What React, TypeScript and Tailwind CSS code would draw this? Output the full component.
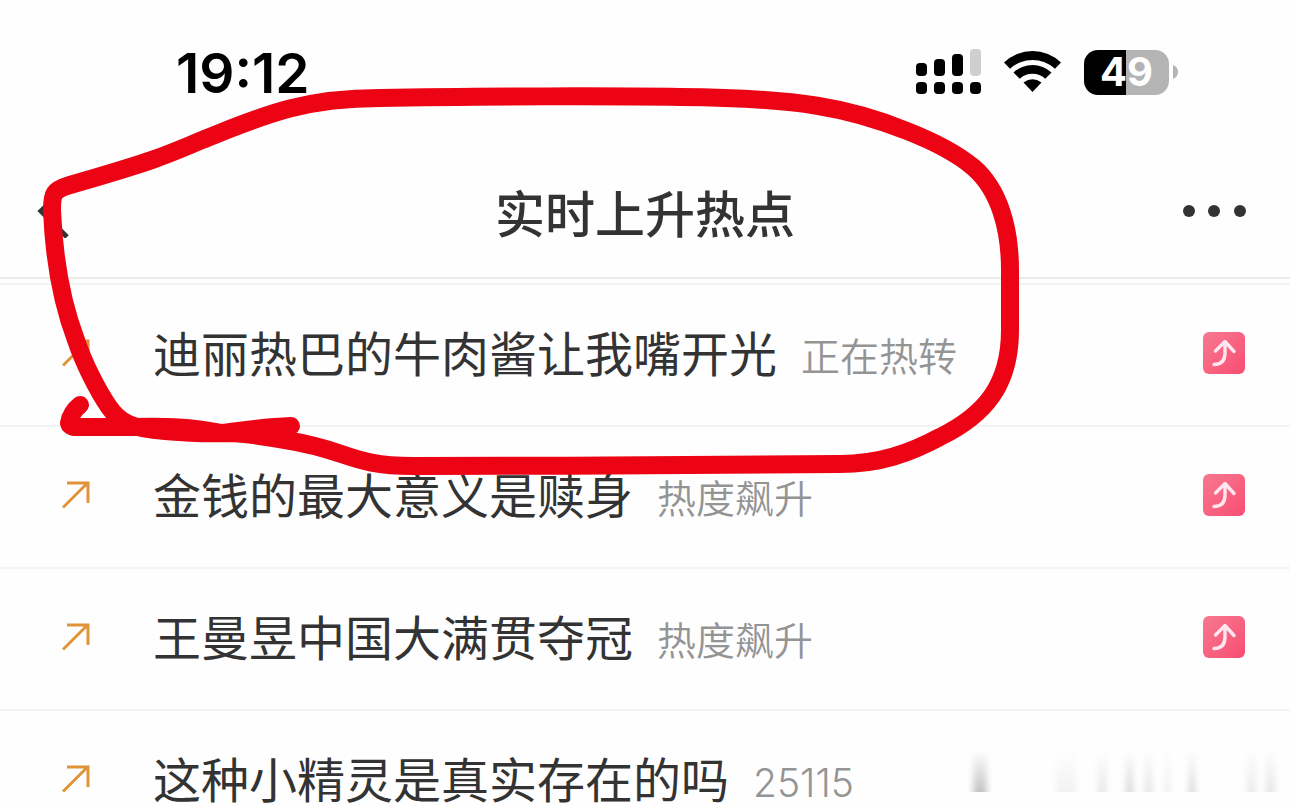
import type { ReactNode } from "react";

type Topic = { title: string; note: string; rising: boolean };

const topics: Topic[] = [
  { title: "迪丽热巴的牛肉酱让我嘴开光", note: "正在热转", rising: true },
  { title: "金钱的最大意义是赎身", note: "热度飙升", rising: true },
  { title: "王曼昱中国大满贯夺冠", note: "热度飙升", rising: true },
  { title: "这种小精灵是真实存在的吗", note: "25115", rising: false },
];

function Signal() {
  return (
    <svg width="66" height="46" viewBox="0 0 66 46" aria-label="信号">
      <rect x="0" y="14" width="11" height="13" rx="4" />
      <rect x="18" y="10" width="11" height="17" rx="4" />
      <rect x="36" y="5" width="11" height="22" rx="4" />
      <rect x="54" y="0" width="11" height="27" rx="4" fill="#cfcfcf" />
      {[0, 18, 36, 54].map((x) => (
        <rect key={x} x={x} y="33" width="11" height="12" rx="4" />
      ))}
    </svg>
  );
}

function Wifi() {
  return (
    <svg width="58" height="44" viewBox="0 0 58 44" aria-label="无线网络">
      <path d="M0 12.500 A41 41 0 0 1 57 12.500 L51 18.800 A33 33 0 0 0 6 18.800 Z" />
      <path d="M9.500 22.500 A28 28 0 0 1 47.500 22.500 L41.300 28.800 A19 19 0 0 0 15.700 28.800 Z" />
      <path d="M19.500 32.500 Q28.500 26 37.500 32.500 L28.500 42 Z" />
    </svg>
  );
}

function Battery() {
  return (
    <div className="flex items-center gap-1" aria-label="电量 49%">
      <div className="flex h-[45px] w-[85px] items-center justify-center rounded-[14px] bg-[linear-gradient(to_right,#000_50%,#b4b4b4_50%)] font-[Inter,sans-serif] text-[40px] leading-none font-bold text-white">
        49
      </div>
      <svg width="5" height="14" viewBox="0 0 5 14">
        <path d="M0 0 Q5 2 5 7 Q5 12 0 14Z" fill="#b4b4b4" />
      </svg>
    </div>
  );
}

function IconButton({ label, children }: { label: string; children: ReactNode }) {
  return (
    <button type="button" aria-label={label} className="flex items-center">
      {children}
    </button>
  );
}

function TrendArrow() {
  return (
    <svg width="28" height="28" viewBox="0 0 28 28" fill="none" stroke="#e0943a" strokeWidth="3">
      <path d="M1 26.500 L25.500 2 M5 2 H26 V22" />
    </svg>
  );
}

function RisingBadge() {
  return (
    <span className="flex size-[42px] rounded-md bg-linear-to-br from-[#f6788f] to-[#f84c72]">
      <svg
        width="42"
        height="42"
        viewBox="0 0 42 42"
        fill="none"
        stroke="#ffe6f0"
        strokeWidth="3.400"
        strokeLinecap="round"
        strokeLinejoin="round"
        aria-label="上升"
      >
        <path d="M12.500 19 L22 9.500 L31 19.500 M22 10 V21 Q22 32.500 11 32.500" />
      </svg>
    </span>
  );
}

function TopicRow({ topic }: { topic: Topic }) {
  return (
    <li className="border-t-2 border-[#f4f4f4]">
      <a href="#topic" className="flex h-[140px] items-center pr-[45px] pb-1 pl-[62px]">
        <TrendArrow />
        <span className="ml-[63px] pb-1 text-[48px] leading-[44px] text-[#333]">{topic.title}</span>
        <span className="ml-6 flex-1 pt-2 font-[Inter,'Noto_Sans_CJK_SC',sans-serif] text-[39px] leading-[40px] font-[350] text-[#949494]">
          {topic.note}
        </span>
        {topic.rising && <RisingBadge />}
      </a>
    </li>
  );
}

function Scribble() {
  return (
    <svg
      className="pointer-events-none absolute top-0 left-0"
      width="1290"
      height="805"
      viewBox="0 0 1290 805"
      fill="none"
      stroke="#ec0414"
      strokeWidth="18"
      strokeLinecap="round"
      strokeLinejoin="round"
      aria-hidden="true"
    >
      <path d="M80 405 Q71 412 69 423 Q70 427 77 427 H130 C170 426 190 427 222 433 C245 430 265 427 291 426" />
      <path d="M52 210 C52 194 53 190 70 185 C150 162 165 156 202 140 C260 117 300 98 380 98 C480 96 620 96 680 97 C800 98 850 108 907 131 C935 142 955 152 973 167 C1000 190 1010 230 1010 270 V330 C1010 385 985 415 940 437 C910 453 880 464 840 464 C780 465 558 466 413 466 C350 466 350 450 285 440 C250 434 240 433 222 433 C205 434 190 433 165 431 C132 429 119 422 109 407 C98 391 84 364 76 340 C62 303 54 260 52 210" />
    </svg>
  );
}

function Watermark() {
  const streaks = [
    { x: 33, w: 14, o: 0.34 },
    { x: 116, w: 20, o: 0.07 },
    { x: 158, w: 8, o: 0.14 },
    { x: 186, w: 7, o: 0.23 },
    { x: 205, w: 7, o: 0.16 },
    { x: 225, w: 5, o: 0.1 },
    { x: 249, w: 6, o: 0.24 },
    { x: 307, w: 9, o: 0.12 },
    { x: 326, w: 9, o: 0.14 },
  ];
  return (
    <svg className="pointer-events-none absolute top-[750px] right-0" width="350" height="42" viewBox="0 0 350 42" aria-hidden="true">
      <defs>
        <linearGradient id="fade" x1="0" y1="0" x2="0" y2="1">
          <stop offset="0" stopColor="#555" stopOpacity="0" />
          <stop offset="1" stopColor="#555" />
        </linearGradient>
        <filter id="soft" x="-1" width="3" y="0" height="1">
          <feGaussianBlur stdDeviation="3 0" />
        </filter>
      </defs>
      {streaks.map((s) => (
        <rect key={s.x} x={s.x} y="0" width={s.w} height="42" fill="url(#fade)" opacity={s.o} filter="url(#soft)" />
      ))}
    </svg>
  );
}

export default function App() {
  return (
    <div className="relative h-screen overflow-hidden bg-[#fefefe] font-['Noto_Sans_CJK_SC',sans-serif]">
      <div className="flex h-[144px] items-center justify-between pr-[112px] pl-[176px]">
        <time className="pt-[2px] font-[Inter,sans-serif] text-[55px] leading-none font-semibold text-black">19:12</time>
        <div className="flex items-center gap-[22px]">
          <Signal />
          <Wifi />
          <Battery />
        </div>
      </div>
      <header className="flex h-[135px] items-center justify-between border-b-2 border-[#ebebeb] px-[36px]">
        <IconButton label="返回">
          <svg width="72" height="54" viewBox="0 0 72 54" fill="none" stroke="#333" strokeWidth="5">
            <path d="M31 2 L5 27 L31 53" />
          </svg>
        </IconButton>
        <h1 className="text-[50px] leading-[72px] font-medium text-[#333]">实时上升热点</h1>
        <IconButton label="更多">
          <svg width="72" height="14" viewBox="0 0 72 14" fill="#333">
            <circle cx="7" cy="7" r="6" />
            <circle cx="32" cy="7" r="6" />
            <circle cx="58" cy="7" r="6" />
          </svg>
        </IconButton>
      </header>
      <ul className="mt-1">
        {topics.map((topic) => (
          <TopicRow key={topic.title} topic={topic} />
        ))}
      </ul>
      <Scribble />
      <Watermark />
    </div>
  );
}
